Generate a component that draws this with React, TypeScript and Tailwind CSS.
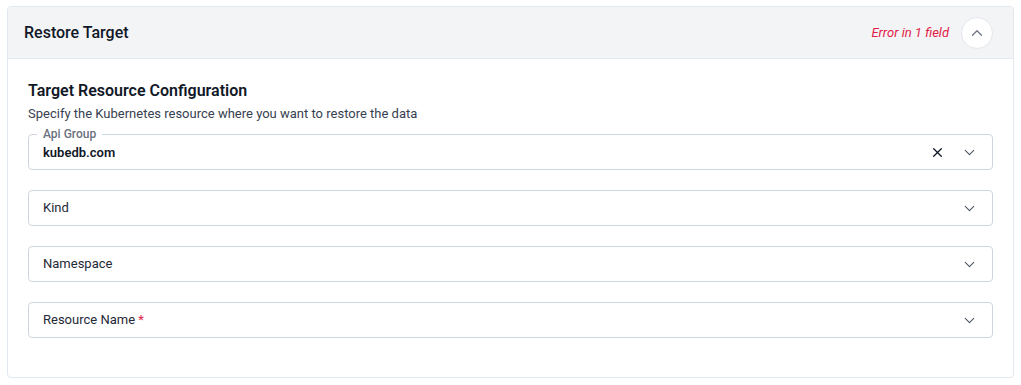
import React from "react";

const Chevron = ({ up = false, size = 17 }: { up?: boolean; size?: number }) => (
  <svg width={size} height={size} viewBox="0 0 24 24" fill="none" stroke="currentColor" strokeWidth="1.6" strokeLinecap="round" strokeLinejoin="round">
    {up ? <path d="M6 15l6-6 6 6" /> : <path d="M6 9l6 6 6-6" />}
  </svg>
);

const XIcon = () => (
  <svg width="13" height="13" viewBox="0 0 24 24" fill="none" stroke="currentColor" strokeWidth="2.4" strokeLinecap="round">
    <path d="M5 5l14 14M19 5L5 19" />
  </svg>
);

const Field = ({ label, required = false }: { label: string; required?: boolean }) => (
  <div className="h-[36px] border border-[#cfd6e0] rounded-[4px] flex items-center pl-[14px] pr-[14px] bg-white">
    <span className="flex-1 text-[13px] text-[#1f2937]">
      {label}
      {required && <span className="text-[#e11d48]"> *</span>}
    </span>
    <span className="text-[#4b5563]"><Chevron /></span>
  </div>
);

export default function App() {
  return (
    <div className="w-[1021px] h-[385px] bg-white px-[7px] pt-[6px] pb-[7px]" style={{ fontFamily: "Roboto, 'Noto Sans', sans-serif" }}>
      <div className="border border-[#e2e8f0] rounded-[4px] h-full flex flex-col">
        <div className="h-[52px] bg-[#f3f4f6] border-b border-[#e2e8f0] flex items-center pl-[16px] pr-[20px] rounded-t-[4px]">
          <div className="flex-1 text-[16px] font-medium text-[#111827]">Restore Target</div>
          <span className="italic text-[13px] text-[#e11d48] mr-[12px]">Error in 1 field</span>
          <div className="w-[32px] h-[32px] rounded-full bg-white border border-[#e5e7eb] flex items-center justify-center text-[#6b7280]">
            <Chevron up size={18} />
          </div>
        </div>
        <div className="px-[20px] pt-[20px]">
          <div className="text-[16px] font-semibold text-[#111827] leading-[24px]">Target Resource Configuration</div>
          <div className="text-[13px] text-[#374151] leading-[20px] mt-[1px]">Specify the Kubernetes resource where you want to restore the data</div>
          <div className="mt-[10px] flex flex-col gap-[20px]">
            <div className="relative h-[36px] border border-[#cfd6e0] rounded-[4px] flex items-center pl-[14px] pr-[14px]">
              <span className="absolute -top-[8px] left-[8px] px-[6px] bg-white text-[12px] leading-[14px] text-[#6b7280] font-medium">Api Group</span>
              <span className="flex-1 text-[13px] font-semibold text-[#111827] pt-[2px]">kubedb.com</span>
              <span className="text-[#111827] mr-[17px]"><XIcon /></span>
              <span className="text-[#4b5563]"><Chevron /></span>
            </div>
            <Field label="Kind" />
            <Field label="Namespace" />
            <Field label="Resource Name" required />
          </div>
        </div>
      </div>
    </div>
  );
}
